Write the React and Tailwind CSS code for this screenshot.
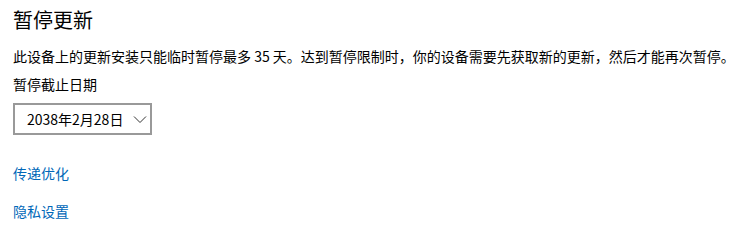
export default function App() {
  return (
    <div
      className="w-[749px] h-[227px] bg-white text-black pl-[13px] pt-[6px]"
      style={{ fontFamily: '"Noto Sans CJK SC", "Noto Sans", sans-serif' }}
    >
      <h1 className="text-[20px] leading-[28px] font-normal">暂停更新</h1>
      <p className="mt-[12px] text-[14px] leading-[20px]">
        此设备上的更新安装只能临时暂停最多 35 天。达到暂停限制时，你的设备需要先获取新的更新，然后才能再次暂停。
      </p>
      <div className="mt-[8px] text-[14px] leading-[20px]">暂停截止日期</div>
      <button
        type="button"
        className="mt-[9px] flex h-[32px] w-[139px] items-center border-2 border-[#999999] pl-[12px] text-[14px] text-black"
      >
        <span>2038年2月28日</span>
        <svg className="ml-[10px] h-[12px] w-[14px]" viewBox="0 0 14 12" fill="none">
          <path d="M1 3.5 L7 9.5 L13 3.5" stroke="#333" strokeWidth="1" />
        </svg>
      </button>
      <div className="mt-[28px] flex flex-col gap-[18px] text-[14px] leading-[20px] text-[#0067b8]">
        <a>传递优化</a>
        <a>隐私设置</a>
      </div>
    </div>
  );
}
